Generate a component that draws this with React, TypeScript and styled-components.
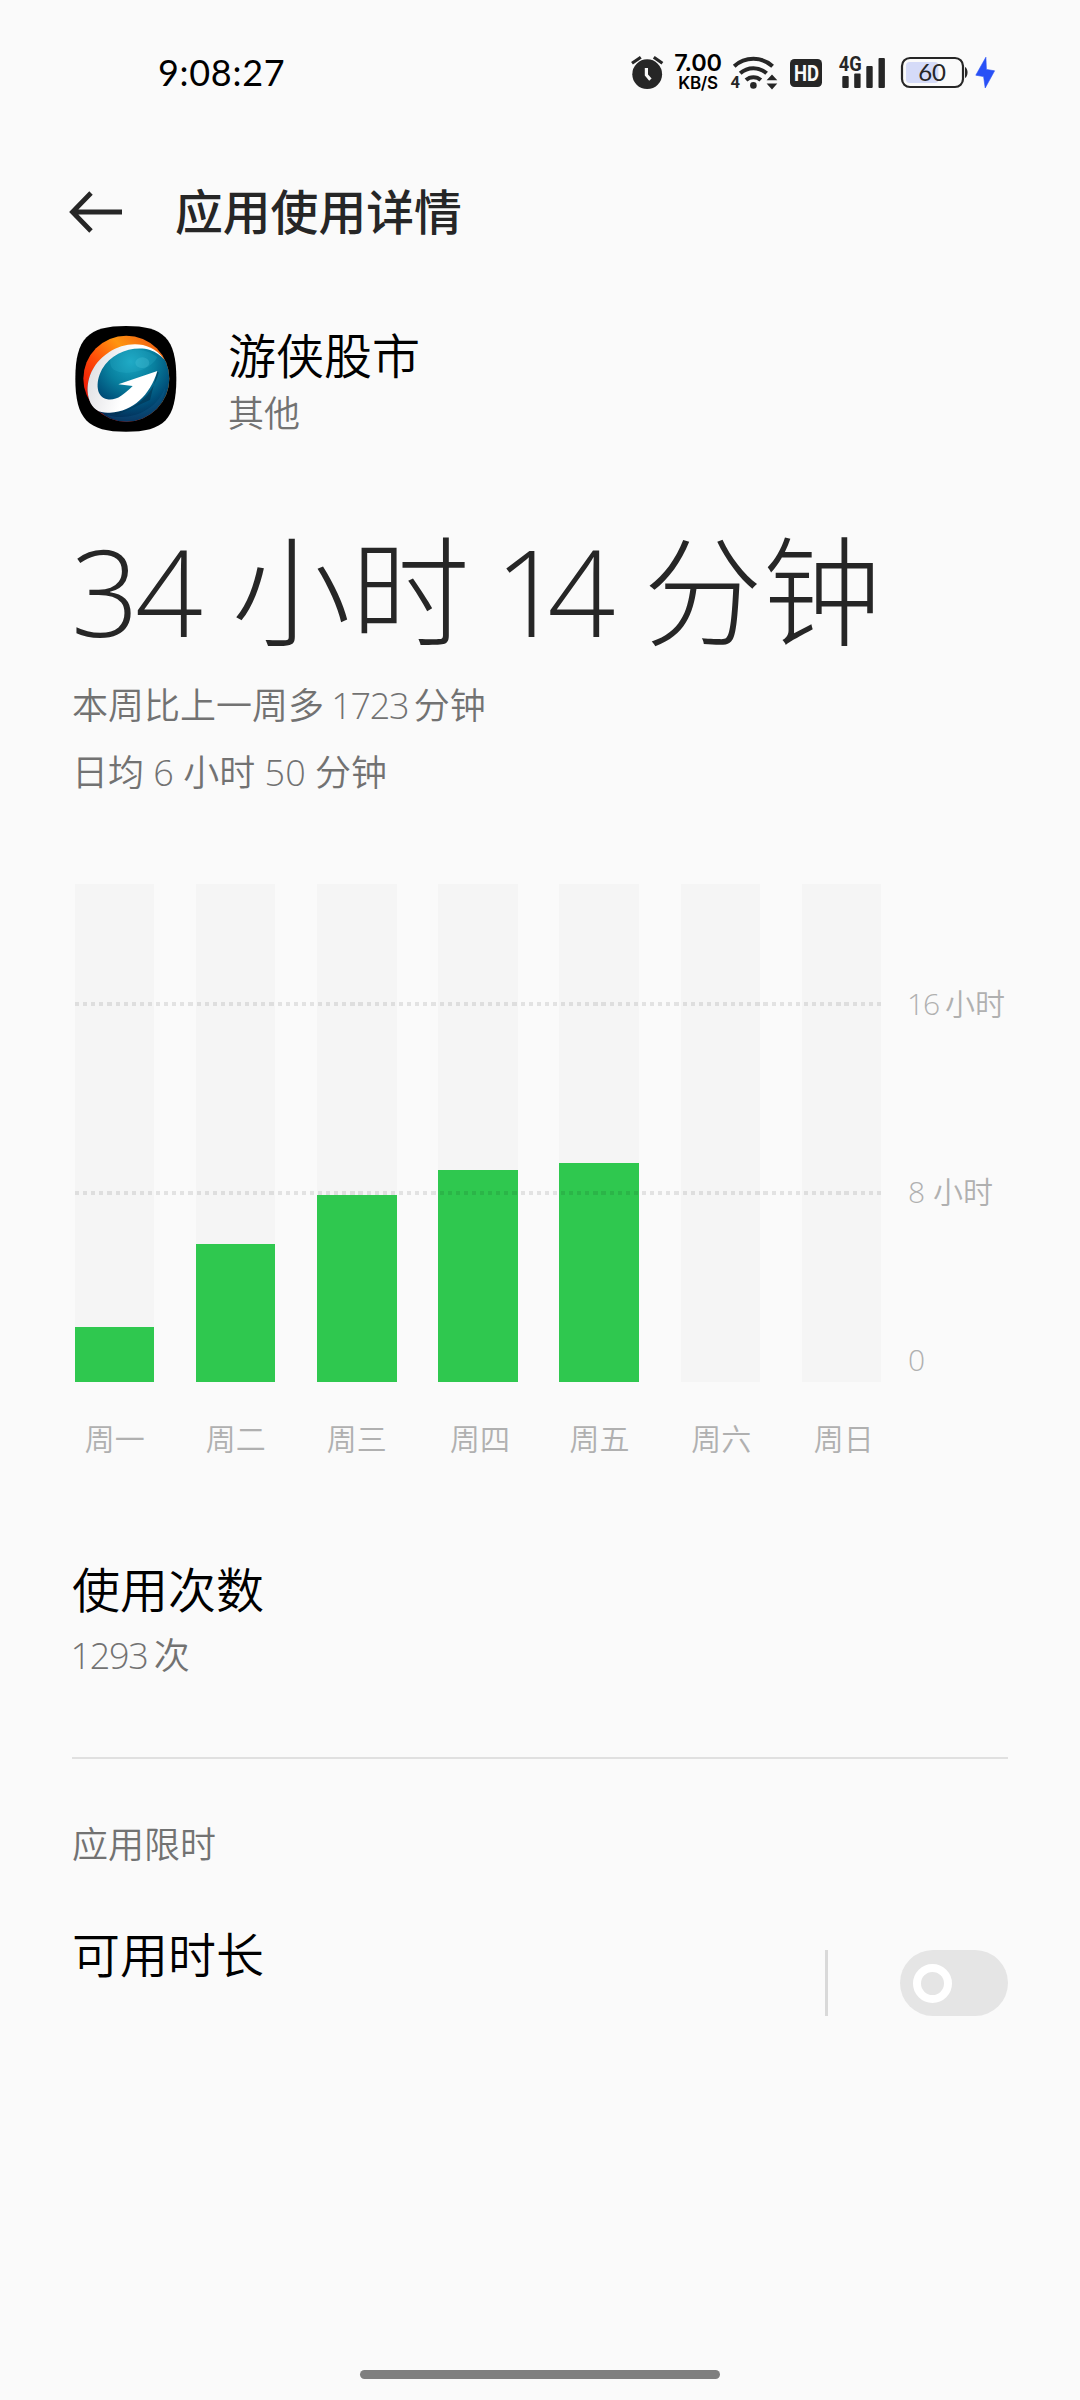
import React from "react";
import styled, { createGlobalStyle } from "styled-components";

const GlobalStyle = createGlobalStyle`
  html, body { margin: 0; padding: 0; background: #fafafa; }
  * { box-sizing: border-box; }
`;

const Screen = styled.div`
  width: 1080px;
  height: 2400px;
  display: flex;
  flex-direction: column;
  background: #fafafa;
  color: #000;
  font-family: "Open Sans", "Noto Sans CJK SC", sans-serif;
  font-weight: 400;
  white-space: nowrap;
  overflow: hidden;
`;

/* Status bar */

const StatusBar = styled.header`
  height: 146px;
  flex: none;
  display: flex;
  justify-content: space-between;
  align-items: center;
  padding: 0 84px 0 158px;
`;

const Clock = styled.time`
  font-family: Lato, sans-serif;
  font-size: 36px;
  line-height: 44px;
  letter-spacing: 0.7px;
  padding-bottom: 2px;
`;

const StatusIcons = styled.div`
  display: flex;
  align-items: center;
  height: 40px;
`;

const StatusGlyph = styled.svg<{ $gap?: number }>`
  display: block;
  flex: none;
  margin-left: ${(p) => p.$gap ?? 0}px;
  overflow: visible;
`;

const NetSpeed = styled.div`
  width: 50px;
  margin-left: 10px;
  display: flex;
  flex-direction: column;
  align-items: center;
  font-family: Inter, sans-serif;
  font-weight: 600;
`;

const SpeedValue = styled.span`
  font-size: 23.5px;
  line-height: 20px;
  letter-spacing: -0.2px;
`;

const SpeedUnit = styled.span`
  font-size: 17px;
  line-height: 20px;
  letter-spacing: -0.3px;
`;

/* Title bar */

const TitleBar = styled.div`
  height: 132px;
  flex: none;
  display: flex;
  align-items: center;
  padding-left: 69px;
`;

const BackButton = styled.button`
  width: 54px;
  height: 44px;
  padding: 0;
  border: 0;
  background: none;
  color: #262626;
`;

const Title = styled.h1`
  margin: 0 0 0 52px;
  font-size: 47.8px;
  line-height: 60px;
  font-weight: 500;
  color: #262626;
`;

/* Shared text */

const Primary = styled.div`
  font-size: 48px;
  line-height: 60px;
  font-weight: 350;
`;

const Secondary = styled.div<{ $line?: number; $top?: number }>`
  font-size: 36px;
  line-height: ${(p) => p.$line ?? 56}px;
  margin-top: ${(p) => p.$top ?? 0}px;
  font-weight: 350;
  color: #727272;
`;

const Num = styled.span<{ $tight: number; $left: number; $right?: number }>`
  letter-spacing: ${(p) => -p.$tight}px;
  margin-left: ${(p) => p.$left}px;
  margin-right: ${(p) => p.$right ?? 0}px;
`;

const AppRow = styled.section`
  display: flex;
  gap: 51px;
  margin-top: 48px;
  padding-left: 75px;
  height: 116px;
  flex: none;
`;

const Summary = styled.section`
  margin-top: 81px;
  padding-left: 72px;
`;

const Total = styled.div`
  font-size: 119px;
  line-height: 137px;
  height: 140px;
  font-weight: 250;
  word-spacing: -6px;
  color: #262626;
`;

/* Chart */

const Chart = styled.section`
  display: grid;
  grid-template-columns: 806px auto;
  column-gap: 27px;
  margin-top: 78px;
  padding-left: 75px;
`;

const Plot = styled.div`
  position: relative;
  height: 498px;
  display: flex;
  justify-content: space-between;
`;

const Track = styled.div`
  width: 79.3px;
  height: 100%;
  display: flex;
  align-items: flex-end;
  background: #f5f5f5;
`;

const Fill = styled.div`
  width: 100%;
  background: #2fc84f;
`;

const GridLine = styled.div<{ $top: number }>`
  position: absolute;
  left: 0;
  right: 0;
  top: ${(p) => p.$top}px;
  height: 4px;
  background: repeating-linear-gradient(90deg, rgba(0, 0, 0, 0.095) 0 4.1px, transparent 4.1px 8.1px);
`;

const Scale = styled.div`
  display: flex;
  flex-direction: column;
  padding-top: 100px;
  height: 498px;
`;

const ScaleLabel = styled.div<{ $after?: number }>`
  font-size: 30px;
  line-height: 40px;
  font-weight: 350;
  color: #b0b0b0;
  margin-bottom: ${(p) => p.$after ?? 0}px;
`;

const Days = styled.div`
  display: flex;
  justify-content: space-between;
  margin-top: 37px;
`;

const Day = styled.div<{ $nudge: number }>`
  width: 79.3px;
  padding-left: ${(p) => p.$nudge * 2}px;
  font-size: 30px;
  line-height: 40px;
  font-weight: 350;
  text-align: center;
  color: #b0b0b0;
`;

/* Lower sections */

const Opens = styled.section`
  margin-top: 101px;
  padding-left: 72px;
`;

const Divider = styled.hr`
  width: 936px;
  height: 2px;
  border: 0;
  margin: 73px 72px 0;
  background: #e0e0e0;
  flex: none;
`;

const Limit = styled.section`
  margin-top: 58px;
  padding: 0 72px;
`;

const LimitRow = styled.div`
  display: flex;
  justify-content: space-between;
  height: 91px;
  margin-top: 52px;
`;

const LimitControls = styled.div`
  display: flex;
  align-self: flex-end;
  gap: 72px;
  height: 66px;
`;

const Separator = styled.div`
  width: 3px;
  background: #d9d9d9;
`;

const Toggle = styled.button`
  width: 108px;
  height: 66px;
  padding: 0 0 0 13px;
  border: 0;
  border-radius: 33px;
  background: #e5e5e5;
  display: flex;
  align-items: center;
`;

const Knob = styled.span`
  width: 39px;
  height: 39px;
  border: 8px solid #fff;
  border-radius: 50%;
`;

const HomeIndicator = styled.div`
  width: 360px;
  height: 9px;
  margin: auto auto 21px;
  border-radius: 5px;
  background: #7f7f7f;
`;

const INK = "#262626";

const AlarmIcon = () => (
  <StatusGlyph width="32" height="34" viewBox="631 56 32 34">
    <circle cx="647.2" cy="74.2" r="14.9" fill={INK} />
    <path d="M632 63.2L640.8 57.2M653.8 57.2L662.4 63.2" stroke={INK} strokeWidth="3.2" fill="none" />
    <path d="M646.4 68v7l4 4.6" stroke="#fafafa" strokeWidth="3.2" fill="none" />
  </StatusGlyph>
);

const WifiIcon = () => (
  <StatusGlyph $gap={8} width="47" height="36" viewBox="731 54 47 36">
    <g fill="none" stroke={INK} strokeWidth="4">
      <path d="M734.2 65.2A28.5 28.5 0 0 1 772.6 65.2" />
      <path d="M740.2 72.3A19.5 19.5 0 0 1 766.6 72.3" />
      <path d="M746 79A11 11 0 0 1 760.8 79" />
    </g>
    <circle cx="753.4" cy="84.4" r="3.3" fill={INK} />
    <path d="M766.6 79.2L772 73.4L777.3 79.2ZM766.6 82.6H777.3L772 88.4Z" fill={INK} />
    <text x="730.6" y="87" fontSize="16.5" fontFamily="Roboto" fontWeight="700" fill={INK}>4</text>
  </StatusGlyph>
);

const HdIcon = () => (
  <StatusGlyph $gap={12} width="32" height="28" viewBox="790 59 32 28">
    <rect x="790" y="59" width="32" height="28" rx="4.5" fill={INK} />
    <text x="794" y="81" fontSize="22.5" fontFamily="Roboto" fontWeight="700" fill="#fafafa" textLength="25" lengthAdjust="spacingAndGlyphs">HD</text>
  </StatusGlyph>
);

const SignalIcon = () => (
  <StatusGlyph $gap={17} width="46" height="34" viewBox="839 55 46 34">
    <text x="838.8" y="70.4" fontSize="21" fontFamily="Roboto" fontWeight="700" fill={INK} textLength="23" lengthAdjust="spacingAndGlyphs">4G</text>
    <g fill={INK}>
      <rect x="842.3" y="75" width="6.4" height="12" rx="1" />
      <rect x="854.2" y="72.4" width="6.4" height="14.6" rx="1" />
      <rect x="866.3" y="65" width="6.4" height="22" rx="1" />
      <rect x="878.5" y="57" width="6.4" height="30" rx="1" />
    </g>
  </StatusGlyph>
);

const BatteryIcon = () => (
  <StatusGlyph $gap={16} width="67" height="32" viewBox="901 57 67 32">
    <rect x="906" y="62" width="32.4" height="21" rx="3.5" fill="#d5dbf8" />
    <rect x="902" y="58" width="61" height="29" rx="8" fill="none" stroke={INK} strokeWidth="2.2" />
    <path d="M965 67C968.4 68.6 968.4 76.4 965 78Z" fill={INK} />
    <text x="918.2" y="81" fontSize="24" fontFamily="Lato" fill={INK}>60</text>
  </StatusGlyph>
);

const BoltIcon = () => (
  <StatusGlyph $gap={8} width="20" height="32" viewBox="976 57 20 32">
    <path d="M985.9 57.2L975.8 75.2L983.6 76.6L985.2 88L994.6 70.8L986.4 69.4Z" fill="#2850f6" stroke="#2850f6" strokeWidth=".6" strokeLinejoin="round" />
  </StatusGlyph>
);

const AppLogo = () => (
  <svg width="102" height="106" viewBox="75 78 306 318">
    <defs>
      <clipPath id="ball"><circle cx="229" cy="236" r="129" /></clipPath>
      <linearGradient id="warm" x1="105" y1="290" x2="290" y2="120" gradientUnits="userSpaceOnUse">
        <stop offset="0" stopColor="#e81208" />
        <stop offset=".38" stopColor="#ff4a08" />
        <stop offset=".72" stopColor="#ff9510" />
        <stop offset="1" stopColor="#f36a12" />
      </linearGradient>
      <radialGradient id="sea" cx="242" cy="185" r="180" gradientUnits="userSpaceOnUse">
        <stop offset="0" stopColor="#1aa6c2" />
        <stop offset=".4" stopColor="#087f9e" />
        <stop offset=".72" stopColor="#00507a" />
        <stop offset="1" stopColor="#052a54" />
      </radialGradient>
      <linearGradient id="swoosh" x1="110" y1="200" x2="320" y2="260" gradientUnits="userSpaceOnUse">
        <stop offset="0" stopColor="#dedee2" />
        <stop offset=".6" stopColor="#ffffff" />
        <stop offset="1" stopColor="#ffffff" />
      </linearGradient>
    </defs>
    <path d="M76 236C76 115 115 78 228 78S379 115 379 236S342 395 228 395S76 357 76 236Z" fill="#000" />
    <g clipPath="url(#ball)">
      <rect x="95" y="100" width="270" height="270" fill="url(#warm)" />
      <path d="M342 178C300 122 225 128 178 158C120 195 103 255 118 300C128 328 142 336 160 342V400H400V178Z" fill="url(#sea)" />
      <path d="M182 176C215 140 285 140 322 172C300 214 222 232 190 208C182 200 178 188 182 176Z" fill="#35bcd6" opacity=".2" />
      <ellipse cx="277" cy="188" rx="21" ry="16" fill="#63d6e8" opacity=".22" />
      <path d="M180 340C250 336 306 290 326 218L322 213L300 300L200 345Z" fill="#02324f" opacity=".6" />
      <path d="M170 344C235 366 318 336 346 262C342 330 280 372 215 364C195 360 180 354 170 344Z" fill="#1d6f9e" opacity=".22" />
    </g>
    <path d="M342 178C300 118 225 126 178 156C120 193 103 255 118 300C128 330 150 340 180 338C250 334 300 285 322 213L205 253L248 258C220 285 200 302 172 298C140 293 134 250 156 208C185 158 250 136 300 150C318 156 332 167 342 178Z" fill="url(#swoosh)" />
  </svg>
);

const week = [
  { day: "周一", height: 54.6, nudge: 0 },
  { day: "周二", height: 137.9, nudge: 0 },
  { day: "周三", height: 187, nudge: 0 },
  { day: "周四", height: 211.8, nudge: 2 },
  { day: "周五", height: 218.9, nudge: 0.5 },
  { day: "周六", height: 0, nudge: 1 },
  { day: "周日", height: 0, nudge: 2.5 },
];

export default function App() {
  return (
    <Screen>
      <GlobalStyle />
      <StatusBar>
        <Clock>9:08:27</Clock>
        <StatusIcons>
          <AlarmIcon />
          <NetSpeed>
            <SpeedValue>7.00</SpeedValue>
            <SpeedUnit>KB/S</SpeedUnit>
          </NetSpeed>
          <WifiIcon />
          <HdIcon />
          <SignalIcon />
          <BatteryIcon />
          <BoltIcon />
        </StatusIcons>
      </StatusBar>

      <TitleBar>
        <BackButton aria-label="返回">
          <svg width="54" height="44" viewBox="0 0 54 44" fill="none" stroke="currentColor" strokeWidth="4.8">
            <path d="M53 22H4M22 3L3.5 22L22 41" />
          </svg>
        </BackButton>
        <Title>应用使用详情</Title>
      </TitleBar>

      <AppRow>
        <AppLogo />
        <div>
          <Primary>游侠股市</Primary>
          <Secondary>其他</Secondary>
        </div>
      </AppRow>

      <Summary>
        <Total>
          <Num $tight={4} $left={-1} $right={8}>34</Num> 小时 <Num $tight={15} $left={0} $right={18}>14</Num> 分钟
        </Total>
        <Secondary $line={67} $top={9}>
          本周比上一周多 <Num $tight={1.3} $left={-2} $right={-4}>1723</Num> 分钟
        </Secondary>
        <Secondary $line={67}>日均 6 小时 50 分钟</Secondary>
      </Summary>

      <Chart>
        <Plot>
          {week.map((d) => (
            <Track key={d.day}>
              <Fill style={{ height: d.height }} />
            </Track>
          ))}
          <GridLine $top={118} />
          <GridLine $top={307} />
        </Plot>
        <Scale>
          <ScaleLabel $after={148}>
            <Num $tight={1} $left={-1} $right={-2}>16</Num> 小时
          </ScaleLabel>
          <ScaleLabel $after={128}>8 小时</ScaleLabel>
          <ScaleLabel>0</ScaleLabel>
        </Scale>
        <Days>
          {week.map((d) => (
            <Day key={d.day} $nudge={d.nudge}>{d.day}</Day>
          ))}
        </Days>
      </Chart>

      <Opens>
        <Primary>使用次数</Primary>
        <Secondary $top={8}>
          <Num $tight={1.3} $left={-1.5} $right={-3}>1293</Num> 次
        </Secondary>
      </Opens>

      <Divider />

      <Limit>
        <Secondary>应用限时</Secondary>
        <LimitRow>
          <Primary>可用时长</Primary>
          <LimitControls>
            <Separator />
            <Toggle aria-label="可用时长">
              <Knob />
            </Toggle>
          </LimitControls>
        </LimitRow>
      </Limit>

      <HomeIndicator />
    </Screen>
  );
}
